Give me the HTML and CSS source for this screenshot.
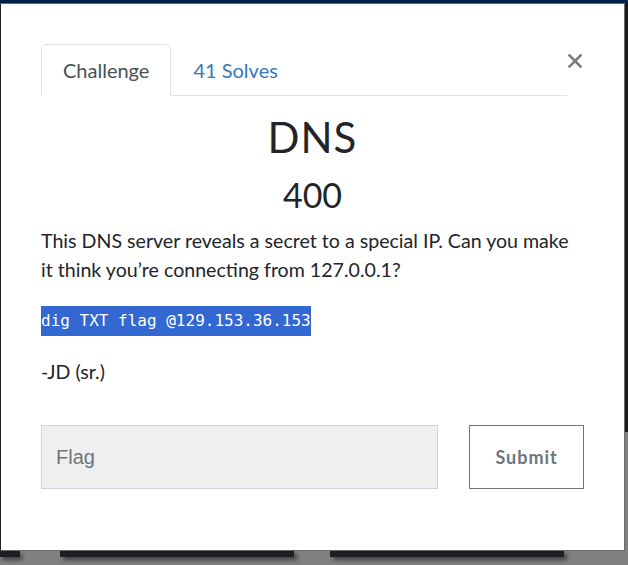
FILE: index.html
```html
<!DOCTYPE html>
<html>
<head>
    <title>DNS - Challenge</title>
    <link rel="stylesheet" href="styles.css">
</head>
<body>
    <div class="modal">
        <div class="modal-header">
            <ul class="nav-tabs">
                <li class="tab active">Challenge</li>
                <li class="tab">41 Solves</li>
            </ul>
            <button class="close" aria-label="Close">
                <svg width="14" height="14" viewBox="0 0 14 14">
                    <path d="M1.5 1.5 L12.5 12.5 M12.5 1.5 L1.5 12.5" stroke="#7b7b7b" stroke-width="2.6" stroke-linecap="square"/>
                </svg>
            </button>
        </div>
        <h2 class="challenge-name">DNS</h2>
        <h3 class="challenge-value">400</h3>
        <div class="challenge-desc">
            <p>This DNS server reveals a secret to a special IP. Can you make it think you’re connecting from 127.0.0.1?</p>
            <p class="code"><span class="selected">dig TXT flag @129.153.36.153</span></p>
            <p>-JD (sr.)</p>
        </div>
        <form class="submit-row" onsubmit="event.preventDefault()">
            <input type="text" class="flag-input" placeholder="Flag">
            <button type="submit" class="submit-btn">Submit</button>
        </form>
    </div>
    <div class="cards">
        <div class="card-edge"></div>
        <div class="card"></div>
        <div class="card"></div>
    </div>
</body>
</html>
```

FILE: styles.css
```css
html, body {
    height: 100%;
}

body {
    margin: 0;
    overflow: hidden;
    font-family: Lato, 'Noto Sans', sans-serif;
    color: #212529;
    background: linear-gradient(to bottom, #012048 0, #012048 3px, #1c1c1c 3px, #1c1c1c 432px, #808080 432px);
}

.modal {
    box-sizing: border-box;
    width: 625px;
    height: 548px;
    margin-top: 3px;
    padding: 40px 40px 0 40px;
    background-color: #fff;
    border: 1px solid #6a6a6a;
    border-left-color: #222;
}

.modal-header {
    display: flex;
    align-items: flex-start;
}

.nav-tabs {
    display: flex;
    list-style: none;
    margin: 0;
    padding: 0;
    width: 526px;
    border-bottom: 1px solid #dee2e6;
}

.tab {
    padding: 11px 21px;
    font-size: 20px;
    line-height: 28px;
    color: #337ab7;
    border: 1px solid transparent;
    border-top-left-radius: 5px;
    border-top-right-radius: 5px;
    margin-bottom: -1px;
}

.tab.active {
    color: #495057;
    border-color: #dee2e6 #dee2e6 #fff;
}

.close {
    background: none;
    border: 0;
    padding: 0;
    margin: 10px 0 0 1px;
    width: 14px;
    height: 14px;
    cursor: pointer;
}

.close svg {
    display: block;
}

.challenge-name {
    margin: 16px 0 0 0;
    text-align: center;
    font-weight: 400;
    font-size: 42px;
    line-height: 50px;
    letter-spacing: 1px;
    color: #212529;
}

.challenge-value {
    margin: 12px 0 0 0;
    text-align: center;
    font-weight: 400;
    font-size: 34px;
    line-height: 41px;
    color: #212529;
}

.challenge-desc {
    margin-top: 11px;
}

.challenge-desc p {
    margin: 0 0 22px 0;
    font-size: 19.6px;
    line-height: 29px;
}

.challenge-desc .code {
    font-family: 'DejaVu Sans Mono', monospace;
    font-size: 16px;
}

.selected {
    background-color: #3367d1;
    color: #fff;
    padding: 5px 0 6px 0;
}

.submit-row {
    display: flex;
    gap: 31px;
    margin-top: 39px;
}

.flag-input {
    box-sizing: border-box;
    width: 398px;
    height: 64px;
    padding: 0 14px;
    background-color: #efefef;
    border: 1px solid #ced4da;
    font-family: 'Liberation Sans', Arial, sans-serif;
    font-size: 20px;
    color: #495057;
}

.flag-input::placeholder {
    color: #6c757d;
}

.submit-btn {
    box-sizing: border-box;
    width: 115px;
    height: 64px;
    background-color: #fff;
    border: 1px solid #6c757d;
    font-family: Lato, sans-serif;
    font-weight: 700;
    font-size: 18px;
    letter-spacing: 1px;
    color: #6c757d;
    cursor: pointer;
}

.cards {
    display: flex;
    height: 14px;
}

.card-edge {
    width: 20px;
    height: 6px;
    background-color: #1c1e22;
    box-shadow: 2px 3px 4px rgba(0, 0, 0, 0.5);
}

.card {
    width: 234px;
    height: 6px;
    margin-left: 40px;
    background-color: #1c1e22;
    box-shadow: 3px 3px 4px rgba(0, 0, 0, 0.5);
}

.card + .card {
    margin-left: 36px;
}
```
